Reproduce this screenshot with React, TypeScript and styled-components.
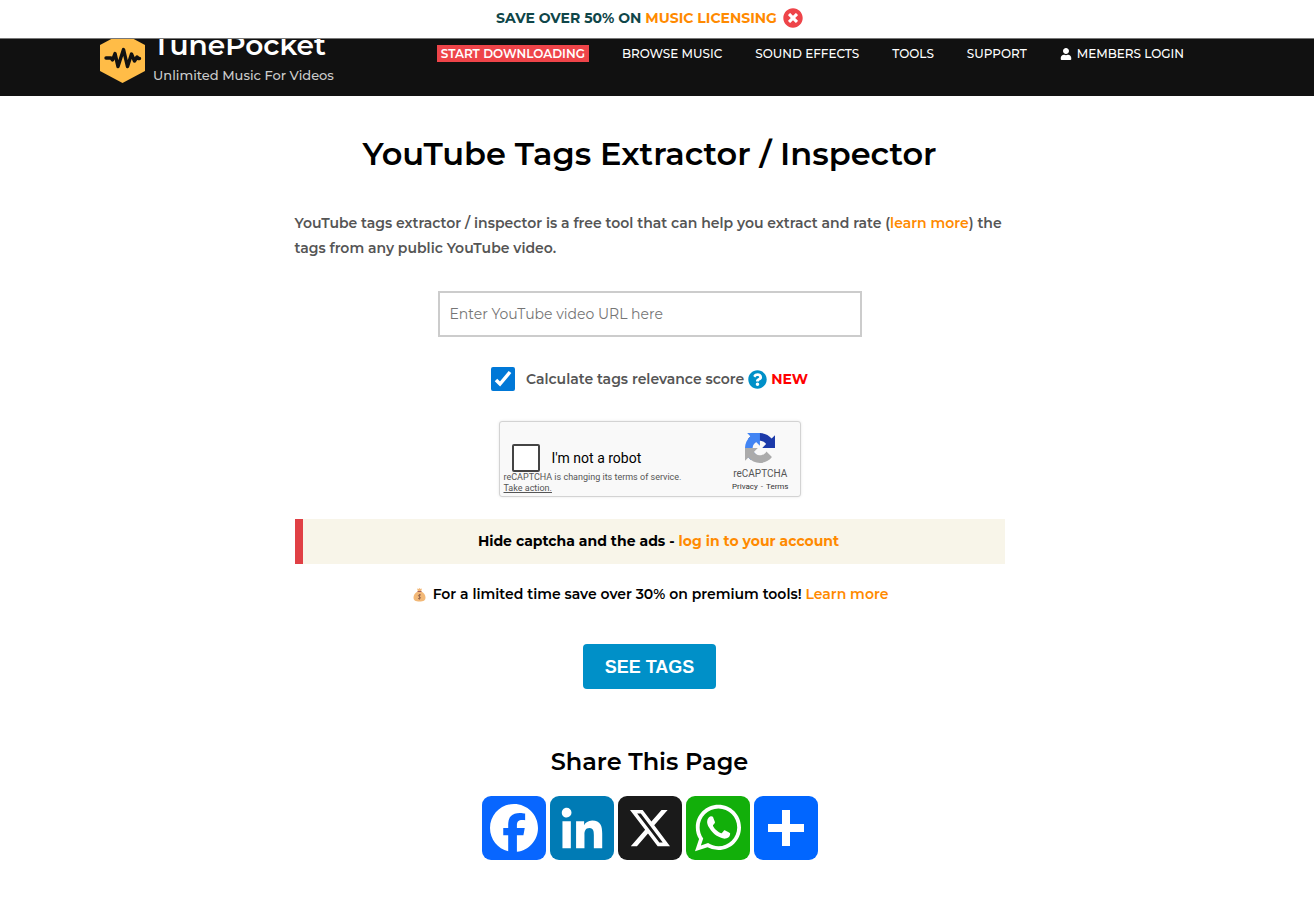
import React from "react";
import styled, { createGlobalStyle } from "styled-components";
import { FaQuestionCircle, FaTimesCircle, FaUser } from "react-icons/fa";

const GlobalStyle = createGlobalStyle`
  *, *::before, *::after { box-sizing: border-box; }
  body {
    margin: 0;
    background: #fff;
    color: #555;
    font: 500 14px/25px Montserrat, Inter, "Liberation Sans", sans-serif;
  }
  a { color: #ff8a00; text-decoration: none; }
  h1, h2, p { margin: 0; color: #000; font-weight: 600; text-align: center; }
  svg { display: block; }
`;

const PromoBar = styled.aside`
  position: fixed;
  z-index: 2;
  inset: 0 0 auto;
  display: flex;
  align-items: center;
  justify-content: center;
  gap: 6px;
  height: 39px;
  padding: 0 15px 2px 0;
  border-bottom: 1px solid #777;
  background: #fff;
  color: #0f4649;
  font-weight: 700;
`;

const CloseButton = styled.button`
  padding: 0;
  border: 0;
  background: none;
  color: #ee4449;
  font-size: 20px;
  cursor: pointer;
`;

const Header = styled.header`
  display: flex;
  justify-content: space-between;
  height: 96px;
  padding: 30px 130px 0 100px;
  background: #111;
`;

const Brand = styled.a`
  display: flex;
  align-items: flex-start;
  gap: 8px;
  color: #ccc;
`;

const LogoMark = styled.svg`
  width: 45px;
  height: 50px;
  margin-top: 3px;
`;

const BrandText = styled.span`
  display: flex;
  flex-direction: column;
  font-size: 13px;
  font-weight: 500;
  line-height: 30px;
`;

const BrandName = styled.strong`
  color: #fff;
  font-size: 28px;
  font-weight: 600;
`;

const Nav = styled.nav`
  display: flex;
  align-items: flex-start;
  gap: 33px;
  padding-top: 15px;
`;

const NavLink = styled.a<{ $highlight?: boolean }>`
  display: flex;
  align-items: center;
  gap: 5px;
  padding: ${(p) => (p.$highlight ? "0 4px" : "0")};
  background: ${(p) => (p.$highlight ? "#ee4449" : "none")};
  color: #fff;
  font-size: 12px;
  font-weight: ${(p) => (p.$highlight ? 600 : 500)};
  line-height: 17px;
  white-space: nowrap;
`;

const Main = styled.main`
  display: flex;
  flex-direction: column;
  align-items: center;
  padding: 38px 15px 50px 0;
`;

const Title = styled.h1`
  font-size: 32px;
  line-height: 40px;
`;

const ToolForm = styled.form`
  display: flex;
  flex-direction: column;
  align-items: center;
  width: 100%;
  max-width: 710px;
  margin-top: 37px;
`;

const Intro = styled.p`
  width: 100%;
  color: #555;
  text-align: left;
`;

const UrlInput = styled.input`
  width: 100%;
  max-width: 424px;
  height: 46px;
  margin-top: 30px;
  padding: 0 10px;
  border: 2px solid #ccc;
  background: #fff;
  font: inherit;
  font-weight: 400;
  &::placeholder { color: #757575; opacity: 1; }
`;

const ScoreRow = styled.div`
  display: flex;
  align-items: center;
  gap: 4px;
  margin: 30px 0;
  height: 24px;
  font-weight: 600;
  line-height: 24px;
`;

const ScoreLabel = styled.label`
  display: flex;
  align-items: center;
  gap: 11px;
`;

const Tick = styled.span`
  display: grid;
  > * { grid-area: 1 / 1; }
  svg { pointer-events: none; }
`;

const TickInput = styled.input`
  appearance: none;
  width: 24px;
  height: 24px;
  margin: 0;
  border: 2px solid #0078d7;
  border-radius: 2px;
  background: #fff;
  &:checked { background: #0078d7; }
`;

const HelpLink = styled.a`
  color: #0090c8;
  font-size: 19px;
`;

const NewFlag = styled.strong`
  color: #f00;
  font-weight: 700;
`;

const Captcha = styled.section`
  display: flex;
  justify-content: space-between;
  width: 302px;
  height: 76px;
  padding: 0 11px 0 4px;
  border: 1px solid #d3d3d3;
  border-radius: 3px;
  background: #f9f9f9;
  box-shadow: 0 0 3px rgba(0, 0, 0, 0.1);
  color: #555;
  font-family: Roboto, sans-serif;
  font-weight: 400;
`;

const CaptchaCheck = styled.div`
  display: flex;
  flex-direction: column;
  padding-top: 22px;
`;

const RobotLabel = styled.label`
  display: flex;
  align-items: center;
  gap: 12px;
  height: 28px;
  padding-left: 8px;
  color: #000;
  font-size: 14px;
  line-height: 28px;
`;

const RobotInput = styled.input`
  appearance: none;
  width: 28px;
  height: 28px;
  margin: 0;
  border: 2px solid #444;
  border-radius: 2px;
  background: #fff;
`;

const CaptchaNote = styled.small`
  font-size: 9px;
  line-height: 11px;
  a { display: block; color: #555; text-decoration: underline; }
`;

const CaptchaBrand = styled.div`
  display: flex;
  flex-direction: column;
  align-items: center;
  padding-top: 11px;
  font-size: 10px;
  line-height: 14px;
  svg { width: 30px; height: 30px; margin-bottom: 4px; }
`;

const CaptchaLinks = styled.small`
  display: flex;
  gap: 3px;
  font-size: 8px;
  line-height: 11px;
  a { color: #333; }
`;

const Notice = styled.p`
  width: 100%;
  margin-top: 22px;
  padding: 10px 10px 10px 20px;
  border-left: 8px solid #e04045;
  background: #f8f5e9;
  font-weight: 700;
`;

const Offer = styled.p`
  display: flex;
  align-items: center;
  gap: 4px;
  margin-top: 18px;
  svg { width: 13px; height: 14px; margin: 0 3px 0 2px; }
`;

const SubmitButton = styled.button`
  height: 45px;
  margin-top: 37px;
  padding: 0 22px;
  border: 0;
  border-radius: 4px;
  background: #0090c8;
  color: #fff;
  font: 700 18px/20px "Liberation Sans", Arial, sans-serif;
  cursor: pointer;
`;

const ShareTitle = styled.h2`
  margin-top: 58px;
  font-size: 24px;
  line-height: 30px;
`;

const ShareList = styled.div`
  display: flex;
  gap: 4px;
  margin-top: 19px;
`;

const ShareLink = styled.a<{ $color: string }>`
  width: 64px;
  height: 64px;
  border-radius: 9px;
  background: ${(p) => p.$color};
`;

const navItems = ["BROWSE MUSIC", "SOUND EFFECTS", "TOOLS", "SUPPORT"];

const shareItems = [
  {
    name: "Facebook",
    color: "#0866ff",
    path: "M28 16c0-6.627-5.373-12-12-12S4 9.373 4 16c0 5.628 3.875 10.35 9.101 11.647v-7.98h-2.474V16H13.1v-1.58c0-4.085 1.849-5.978 5.859-5.978.76 0 2.072.15 2.608.298v3.325c-.283-.03-.775-.045-1.386-.045-1.967 0-2.728.745-2.728 2.683V16h3.92l-.673 3.667h-3.247v8.245C23.395 27.195 28 22.135 28 16",
  },
  {
    name: "LinkedIn",
    color: "#007bb5",
    path: "M6.227 12.61h4.19v13.48h-4.19zm2.095-6.7a2.43 2.43 0 0 1 0 4.86c-1.344 0-2.428-1.09-2.428-2.43s1.084-2.43 2.428-2.43m4.72 6.7h4.02v1.84h.058c.56-1.058 1.927-2.176 3.965-2.176 4.238 0 5.02 2.792 5.02 6.42v7.395h-4.183v-6.56c0-1.564-.03-3.574-2.178-3.574-2.18 0-2.514 1.7-2.514 3.46v6.668h-4.187z",
  },
  {
    name: "X",
    color: "#1a1a1a",
    path: "M21.751 7h3.067l-6.7 7.658L26 25.078h-6.172l-4.833-6.32-5.531 6.32h-3.07l7.167-8.19L6 7h6.328l4.37 5.777zm-1.076 16.242h1.7L11.404 8.74H9.58z",
  },
  {
    name: "WhatsApp",
    color: "#12af0a",
    path: "M16.21 4.41C9.973 4.41 4.917 9.465 4.917 15.7c0 2.134.592 4.13 1.62 5.832L4.5 27.59l6.25-2.002a11.24 11.24 0 0 0 5.46 1.404c6.234 0 11.29-5.055 11.29-11.29 0-6.237-5.056-11.292-11.29-11.292m0 20.69c-1.91 0-3.69-.57-5.173-1.553l-3.61 1.156 1.173-3.49a9.35 9.35 0 0 1-1.79-5.512c0-5.18 4.217-9.4 9.4-9.4s9.397 4.22 9.397 9.4c0 5.188-4.214 9.4-9.398 9.4zm5.293-6.832c-.284-.155-1.673-.906-1.934-1.012-.265-.106-.455-.16-.658.12s-.78.91-.954 1.096c-.176.186-.345.203-.628.048-.282-.154-1.2-.494-2.264-1.517-.83-.795-1.373-1.76-1.53-2.055s0-.445.15-.584c.134-.124.3-.326.45-.488.15-.163.203-.28.306-.47.104-.19.06-.36-.005-.506-.066-.147-.59-1.587-.81-2.173-.218-.586-.46-.498-.63-.505-.168-.007-.358-.038-.55-.045-.19-.007-.51.054-.78.332-.277.274-1.05.943-1.1 2.362-.055 1.418.926 2.826 1.064 3.023.137.2 1.874 3.272 4.76 4.537 2.888 1.264 2.9.878 3.43.85.53-.027 1.734-.633 2-1.297s.287-1.24.22-1.363c-.07-.123-.26-.203-.54-.357z",
  },
  { name: "More", color: "#0166ff", path: "M14 7h4v18h-4zM7 14h18v4H7z" },
];

function RecaptchaLogo() {
  return (
    <svg viewBox="0 0 64 64" aria-hidden="true">
      <path fill="#1c3aa9" d="M64 31.955l-.033-1.37V4.687l-7.16 7.16C50.948 4.674 42.033.093 32.05.093c-10.4 0-19.622 4.96-25.458 12.64l11.736 11.86a15.55 15.55 0 0 1 4.754-5.334c2.05-1.6 4.952-2.906 8.968-2.906.485 0 .86.057 1.135.163 4.976.393 9.288 3.14 11.828 7.124l-8.307 8.307L64 31.953" />
      <path fill="#4285f4" d="M31.862.094l-1.37.033H4.594l7.16 7.16C4.58 13.147 0 22.06 0 32.046c0 10.4 4.96 19.622 12.64 25.458L24.5 45.768a15.55 15.55 0 0 1-5.334-4.754c-1.6-2.05-2.906-4.952-2.906-8.968 0-.485.057-.86.163-1.135.393-4.976 3.14-9.288 7.124-11.828l8.307 8.307L31.86.095" />
      <path fill="#ababab" d="M.001 32.045l.033 1.37v25.898l7.16-7.16c5.86 7.173 14.774 11.754 24.76 11.754 10.4 0 19.622-4.96 25.458-12.64l-11.736-11.86a15.55 15.55 0 0 1-4.754 5.334c-2.05 1.6-4.952 2.906-8.968 2.906-.485 0-.86-.057-1.135-.163-4.976-.393-9.288-3.14-11.828-7.124l8.307-8.307c-10.522.04-22.4.066-27.295-.005" />
    </svg>
  );
}

function MoneyBag() {
  return (
    <svg viewBox="0 0 26 28" aria-hidden="true">
      <path fill="#f2b877" d="M8 1l3 1 2-2 2 2 3-1-2 6c6 2 9 7 9 12 0 6-4 8-12 8S1 25 1 19c0-5 3-10 9-12z" />
      <path fill="#a8605a" d="M9 6h8v2H9z" />
      <path fill="none" stroke="#9a6a50" strokeWidth="2" d="M16 14c-5-2-7 2-3 3.500s2 5-3 3.500M13 12v11" />
    </svg>
  );
}

export default function App() {
  return (
    <>
      <GlobalStyle />
      <PromoBar>
        <span>
          SAVE OVER 50% ON <a href="#licensing">MUSIC LICENSING</a>
        </span>
        <CloseButton type="button" aria-label="Close">
          <FaTimesCircle />
        </CloseButton>
      </PromoBar>
      <Header>
        <Brand href="#home">
          <LogoMark viewBox="0 0 45 50" aria-hidden="true">
            <path fill="#ffbc47" d="M22.5 0L45 12v26L22.5 50 0 38V12z" />
            <path
              fill="none"
              stroke="#111"
              strokeWidth="3.400"
              strokeLinecap="round"
              strokeLinejoin="round"
              d="M6 25h5l1.500 2 2.500-6.500 3 13 5.500-17 4 17 4-12.500 3 7 2.500-4 1.500 1.500h1"
            />
          </LogoMark>
          <BrandText>
            <BrandName>TunePocket</BrandName>
            Unlimited Music For Videos
          </BrandText>
        </Brand>
        <Nav>
          <NavLink href="#start" $highlight>START DOWNLOADING</NavLink>
          {navItems.map((item) => (
            <NavLink href="#menu" key={item}>{item}</NavLink>
          ))}
          <NavLink href="#login">
            <FaUser />
            MEMBERS LOGIN
          </NavLink>
        </Nav>
      </Header>
      <Main>
        <Title>YouTube Tags Extractor / Inspector</Title>
        <ToolForm onSubmit={(e) => e.preventDefault()}>
          <Intro>
            YouTube tags extractor / inspector is a free tool that can help you extract and rate (
            <a href="#rating">learn more</a>) the tags from any public YouTube video.
          </Intro>
          <UrlInput type="text" aria-label="YouTube video URL" placeholder="Enter YouTube video URL here" />
          <ScoreRow>
            <ScoreLabel>
              <Tick>
                <TickInput type="checkbox" defaultChecked />
                <svg width="24" height="24" viewBox="0 0 24 24" aria-hidden="true">
                  <path d="M5 13l4 4L19 5" fill="none" stroke="#fff" strokeWidth="3.500" />
                </svg>
              </Tick>
              Calculate tags relevance score
            </ScoreLabel>
            <HelpLink href="#help" aria-label="Help">
              <FaQuestionCircle />
            </HelpLink>
            <NewFlag>NEW</NewFlag>
          </ScoreRow>
          <Captcha>
            <CaptchaCheck>
              <RobotLabel>
                <RobotInput type="checkbox" />
                I'm not a robot
              </RobotLabel>
              <CaptchaNote>
                reCAPTCHA is changing its terms of service.
                <a href="#action">Take action.</a>
              </CaptchaNote>
            </CaptchaCheck>
            <CaptchaBrand>
              <RecaptchaLogo />
              reCAPTCHA
              <CaptchaLinks>
                <a href="#privacy">Privacy</a>
                <span>-</span>
                <a href="#terms">Terms</a>
              </CaptchaLinks>
            </CaptchaBrand>
          </Captcha>
          <Notice>
            Hide captcha and the ads - <a href="#account">log in to your account</a>
          </Notice>
          <Offer>
            <MoneyBag />
            For a limited time save over 30% on premium tools! <a href="#premium">Learn more</a>
          </Offer>
          <SubmitButton type="submit">SEE TAGS</SubmitButton>
        </ToolForm>
        <ShareTitle>Share This Page</ShareTitle>
        <ShareList>
          {shareItems.map((item) => (
            <ShareLink key={item.name} href="#share" aria-label={item.name} $color={item.color}>
              <svg viewBox="0 0 32 32" aria-hidden="true">
                <path fill="#fff" d={item.path} />
              </svg>
            </ShareLink>
          ))}
        </ShareList>
      </Main>
    </>
  );
}
